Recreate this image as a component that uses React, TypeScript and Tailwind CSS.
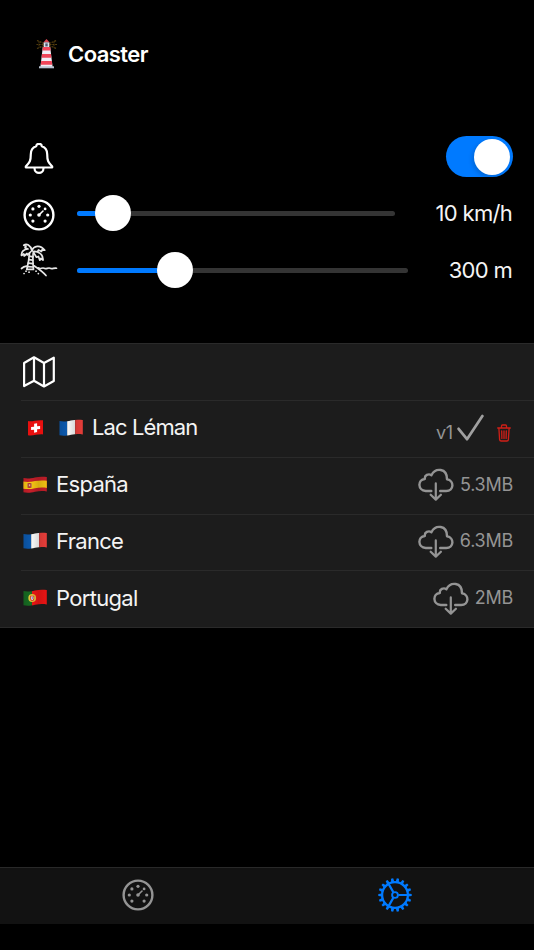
import React from "react";

const Lighthouse: React.FC = () => (
  <svg className="block" width="24" height="32" viewBox="0 0 24 32" fill="none">
    <g stroke="#57400f" strokeWidth="1.2" strokeDasharray="2 0.8">
      <path d="M8 5.5 1 2.5M7.5 6.5H.5M8 7.5 1 10.5M13 5.5 20.5 2.5M13.5 6.5h7.5M13 7.5l7.5 3" />
      <path d="M3 3.5v6M18 3.5v6" strokeWidth="0.8" />
    </g>
    <path d="M7.3 4.4 10.5 1l3.2 3.4z" fill="#d84350" />
    <path d="M7.7 4.4h5.6v5H7.7z" fill="#d9e1ee" />
    <path d="M9.3 5.4h2.4v3H9.3z" fill="#4f5b75" />
    <path d="M6.8 9h7.4l2.4 20H4.4z" fill="#f1eef6" />
    <path
      d="M6.8 9h7.4l.4 3.5H6.4zM6 16h9l.4 3.7H5.6zM5.2 23h10.6l.4 3.7H4.8z"
      fill="#f04559"
    />
    <path d="M3 28.3h15v2H3z" fill="#bac4d3" />
  </svg>
);

const Bell: React.FC = () => (
  <svg
    className="block"
    width="30"
    height="32"
    viewBox="0 0 30 32"
    fill="none"
    stroke="white"
    strokeWidth="2.2"
    strokeLinejoin="round"
  >
    <path d="M12.2 3.2C12.2 0 17.8 0 17.8 3.2C21.6 4.4 23.2 7.3 23.2 11.2C23.2 18 24.2 19.2 28 23.2C28.5 24 28.2 24.5 27.4 24.5H2.6C1.8 24.5 1.5 24 2 23.2C5.8 19.2 6.8 18 6.8 11.2C6.8 7.3 8.4 4.4 12.2 3.2Z" />
    <path d="M10.5 25C10.5 31.6 19.5 31.6 19.5 25" />
  </svg>
);

const Gauge: React.FC = () => (
  <svg className="block" width="32" height="32" viewBox="-16 -16 32 32">
    <circle r="14.4" fill="none" stroke="currentColor" strokeWidth="2.4" />
    <g fill="currentColor">
      <circle cy="-8.7" r="1.6" />
      <circle cx="-6.1" cy="-6.1" r="1.6" />
      <circle cx="6.1" cy="-6.1" r="1.4" />
      <circle cx="-8.7" r="1.6" />
      <circle cx="8.7" r="1.6" />
      <circle cx="-6.1" cy="6.1" r="1.6" />
      <circle cx="6.1" cy="6.1" r="1.6" />
      <circle r="1.8" />
    </g>
    <path d="M0 0 4-4" stroke="currentColor" strokeWidth="1.6" strokeLinecap="round" />
  </svg>
);

const Palm: React.FC = () => (
  <svg
    className="block"
    width="38"
    height="34"
    viewBox="0 0 38 34"
    fill="none"
    stroke="#e6e6e6"
    strokeWidth="1.7"
    strokeLinecap="round"
    strokeLinejoin="round"
  >
    <path d="M12 7.5C10.5 2 6.5.2 3.8 2.2L6 3.2 5 4.8 8 6C4 6 1 9 1.5 12.5L3.8 11 4.2 13 7 10.5 7.5 12 11 8.5" />
    <path d="M12 7.5C13.5 3 20 1 24.8 7.2L22 6.8 21.5 8.5 18.5 7 17.5 9 13 8.5C18 8 23.5 11 23 17.2L20.8 15.5 19.8 17.2 18.5 13.5 16.5 14.2 13.5 9.5" />
    <path d="M9.5 9.8C9.2 15 8.2 21 6.8 26.4H13.5C12.8 20 12.8 14 13.2 10" />
    <path d="M9.2 13.2 13 13.8M8.8 16.7 12.8 17.2M8.2 20.2 13 20.7M7.4 23.6 13.2 24" />
    <path d="M1.5 25.5C3.2 24 5 23.4 6.5 23.2M14 22.8C18 25.5 22 28 26 32.5" />
    <path d="M18.5 24.8C20.5 26.8 22 24.2 24 25.2C26 26.8 28 24.2 30 25.2C32 26.8 34 24.5 36.5 25.2" />
    <path d="M4 30.5h.1M9 29.2h.1M16 28.2h.1M18.3 30.6h.1M6 28.2h.1" />
  </svg>
);

const MapIcon: React.FC = () => (
  <svg
    className="block"
    width="32"
    height="32"
    viewBox="0 0 32 32"
    fill="none"
    stroke="white"
    strokeWidth="2.2"
    strokeLinejoin="round"
  >
    <path d="M1.1 7 11 1.3 21 7 30.8 1.7V25L21 30.5 11 24.7 1.1 30ZM11 1.3V24.7M21 7V30.5" />
  </svg>
);

const CloudDownload: React.FC = () => (
  <svg
    className="block"
    width="36"
    height="33"
    viewBox="0 0 36 33"
    fill="none"
    stroke="#949494"
    strokeWidth="2.4"
    strokeLinecap="round"
    strokeLinejoin="round"
  >
    <path d="M13.3 23H7.8C-.6 22.4-.5 11.8 6.8 11C6.3 7.2 10.6 5.2 13.4 7.2C17.5-.6 29-.1 29 11.2C36.6 12.6 36 23 28.2 23H22.2" />
    <path d="M17.8 15.4V31.3M12.7 26.7 17.8 31.6 22.9 26.7" strokeWidth="2.2" />
  </svg>
);

const Check: React.FC = () => (
  <svg className="block" width="28" height="28" viewBox="0 0 28 28" fill="none">
    <path
      d="M1.6 14.8 10 25.2 25.4 2"
      stroke="#a0a0a0"
      strokeWidth="2.7"
      strokeLinecap="round"
      strokeLinejoin="round"
    />
  </svg>
);

const Trash: React.FC = () => (
  <svg
    className="block"
    width="14"
    height="18"
    viewBox="0 0 14 18"
    fill="none"
    stroke="#cf1f17"
    strokeWidth="1.3"
    strokeLinecap="round"
    strokeLinejoin="round"
  >
    <path d="M.7 4h12.6M4.5 3.8V1.9Q4.5 1 5.4 1h3.2q.9 0 .9.9v1.9M1.9 4.2l.7 11.4q.1 1.4 1.5 1.4h5.8q1.4 0 1.5-1.4l.7-11.4M4.7 6.8l.2 7.6M7 6.8v7.6M9.3 6.8l-.2 7.6" />
  </svg>
);

const Gear: React.FC = () => (
  <svg
    className="block"
    width="34"
    height="34"
    viewBox="-17 -17 34 34"
    fill="none"
    stroke="#007aff"
  >
    <circle r="12.9" strokeWidth="2.3" />
    <circle r="2.9" strokeWidth="1.9" />
    <path d="M3.3 0H12.5M-1.7-2.9-6.3-10.9M-1.7 2.9-6.3 10.9" strokeWidth="2.2" />
    {Array.from({ length: 18 }, (_, i) => (
      <path
        key={i}
        d="M13.2-1.6 16.7-1.1V1.1L13.2 1.6Z"
        fill="#007aff"
        stroke="none"
        transform={`rotate(${i * 20})`}
      />
    ))}
  </svg>
);

type Country = "ch" | "fr" | "es" | "pt";

const wave =
  "M.5 2C5 2.8 8 2.2 12 1.4C16 .6 20 .5 23.8 1.1V15.4C20 14.8 16 14.9 12 15.7C8 16.5 5 17.1.5 16.3Z";

const Flag: React.FC<{ code: Country }> = ({ code }) => (
  <svg className="block shrink-0" width="24" height="18" viewBox="0 0 24 18">
    <defs>
      <clipPath id={`wave-${code}`}>
        <path d={wave} />
      </clipPath>
      <linearGradient id={`shade-${code}`}>
        <stop offset="0" stopColor="#000" stopOpacity="0.12" />
        <stop offset="0.3" stopColor="#000" stopOpacity="0" />
        <stop offset="0.65" stopColor="#000" stopOpacity="0.14" />
        <stop offset="1" stopColor="#000" stopOpacity="0.04" />
      </linearGradient>
    </defs>
    {code === "ch" && (
      <>
        <path d="M5 2C9 2.8 14 .5 20 1.3V15.4C14 15 10 17.2 5 16.3Z" fill="#e8100f" />
        <path
          d="M11.1 4.7 14.1 4.2V7.3L17.1 6.9V9.9L14.1 10.3V13.1L11.1 13.7V10.7L8.1 11.1V8.1L11.1 7.7Z"
          fill="#fff"
        />
      </>
    )}
    {code !== "ch" && (
      <g clipPath={`url(#wave-${code})`}>
        {code === "fr" && (
          <>
            <path d="M0 0h8.2v18H0z" fill="#0c59ad" />
            <path d="M8.2 0h8v18h-8z" fill="#fff" />
            <path d="M16.2 0H24v18h-7.8z" fill="#f0403c" />
          </>
        )}
        {code === "es" && (
          <>
            <path d="M0 0h24v18H0z" fill="#c81f2a" />
            <path
              d="M0 5.6C5 6.4 8 5.9 12 5.1C16 4.3 20 4.2 24 4.8V11.9C20 11.3 16 11.4 12 12.2C8 13 5 13.5 0 12.7Z"
              fill="#fac913"
            />
            <path d="M4 7.3h5v4.4H4z" fill="#c78743" />
            <path d="M5.2 6.9h2.6v5H5.2z" fill="#b5372b" />
            <path d="M5.9 8.2h1.3v2H5.9z" fill="#d8b9a6" />
          </>
        )}
        {code === "pt" && (
          <>
            <path d="M0 0h9v18H0z" fill="#176b22" />
            <path d="M9 0h15v18H9z" fill="#f31515" />
            <circle cx="9.2" cy="9" r="3.9" fill="#e4c63a" />
            <path d="M7.2 6.7h4v3.2Q11 11.6 9.2 12 7.4 11.6 7.2 9.9Z" fill="#d7302c" />
            <path d="M8 7.4h2.4v2.6L9.2 11.2 8 10Z" fill="#eef0f6" />
            <circle cx="9.2" cy="9" r="0.7" fill="#3452a0" />
          </>
        )}
        <path d="M0 0h24v18H0z" fill={`url(#shade-${code})`} />
      </g>
    )}
  </svg>
);

interface SliderProps {
  width: number;
  value: number;
}

const Slider: React.FC<SliderProps> = ({ width, value }) => (
  <div className="relative flex h-9 items-center" style={{ width }}>
    <div className="h-[5px] w-full overflow-hidden rounded-full bg-[#343434]">
      <div className="h-full bg-[#007aff]" style={{ width: value }}></div>
    </div>
    <div
      className="absolute top-0 h-9 w-9 -translate-x-1/2 rounded-full bg-white"
      style={{ left: value }}
    ></div>
  </div>
);

const downloads: { code: Country; name: string; size: string }[] = [
  { code: "es", name: "España", size: "5.3MB" },
  { code: "fr", name: "France", size: "6.3MB" },
  { code: "pt", name: "Portugal", size: "2MB" },
];

const App: React.FC = () => {
  return (
    <div className="flex h-[950px] w-[534px] flex-col overflow-hidden bg-black font-['Inter','Liberation_Sans',sans-serif] text-[22px] tracking-[-0.7px] text-[#f4f4f4]">
      <header className="flex h-[108px] shrink-0 items-center pl-9">
        <Lighthouse />
        <h1 className="ml-2 text-[22px] font-semibold tracking-[-0.55px] text-white">Coaster</h1>
      </header>

      <section className="flex h-[235px] shrink-0 flex-col pt-5 pr-[21px]">
        <div className="flex h-[57px] items-center pl-6">
          <div className="pt-1">
            <Bell />
          </div>
          <button className="ml-auto flex h-[41px] w-[67px] items-center justify-end rounded-full bg-[#007aff] pr-[3px]">
            <span className="h-9 w-9 rounded-full bg-white shadow-[-2px_2px_4px_rgba(0,0,0,0.15)]"></span>
          </button>
        </div>
        <div className="flex h-[57px] items-center pb-px pl-[23px]">
          <div className="mr-[22px] pt-1 text-white">
            <Gauge />
          </div>
          <Slider width={318} value={35.5} />
          <span className="ml-auto pr-px">10 km/h</span>
        </div>
        <div className="flex h-[56px] items-center pl-5">
          <div className="mr-[19px] pb-[21px]">
            <Palm />
          </div>
          <Slider width={331} value={97.5} />
          <span className="ml-auto pt-px pr-px">300 m</span>
        </div>
      </section>

      <section className="flex shrink-0 flex-col border-y border-[#2a2a2a] bg-[#1c1c1c]">
        <div className="flex h-14 items-center pb-px pl-[23px]">
          <MapIcon />
        </div>
        <div className="ml-[21px] flex h-[56.75px] items-center border-t border-[#2a2a2a] pr-[23px] pb-0.5 pl-[2px]">
          <Flag code="ch" />
          <div className="ml-3">
            <Flag code="fr" />
          </div>
          <span className="ml-[9px] tracking-[-0.9px]">Lac Léman</span>
          <span className="mt-2.5 ml-auto text-[18px] tracking-[-0.2px] text-[#949494]">v1</span>
          <div className="ml-1">
            <Check />
          </div>
          <div className="mt-2.5 ml-3">
            <Trash />
          </div>
        </div>
        {downloads.map(({ code, name, size }) => (
          <div
            key={code}
            className="ml-[21px] flex h-[56.75px] items-center border-t border-[#2a2a2a] pr-[21px] pb-0.5 pl-[2px]"
          >
            <Flag code={code} />
            <span className="ml-[9px]">{name}</span>
            <div className="ml-auto">
              <CloudDownload />
            </div>
            <span className="ml-1.5 pb-px text-[18px] tracking-[-0.25px] text-[#949494]">{size}</span>
          </div>
        ))}
      </section>

      <nav className="mt-auto mb-[26px] flex h-[57px] shrink-0 items-center border-t border-[#292929] bg-[#121212] pb-0.5">
        <div className="flex flex-1 justify-center pl-[10px] text-[#949494]">
          <Gauge />
        </div>
        <div className="flex flex-1 justify-center pr-[11px]">
          <Gear />
        </div>
      </nav>
    </div>
  );
};

export default App;
